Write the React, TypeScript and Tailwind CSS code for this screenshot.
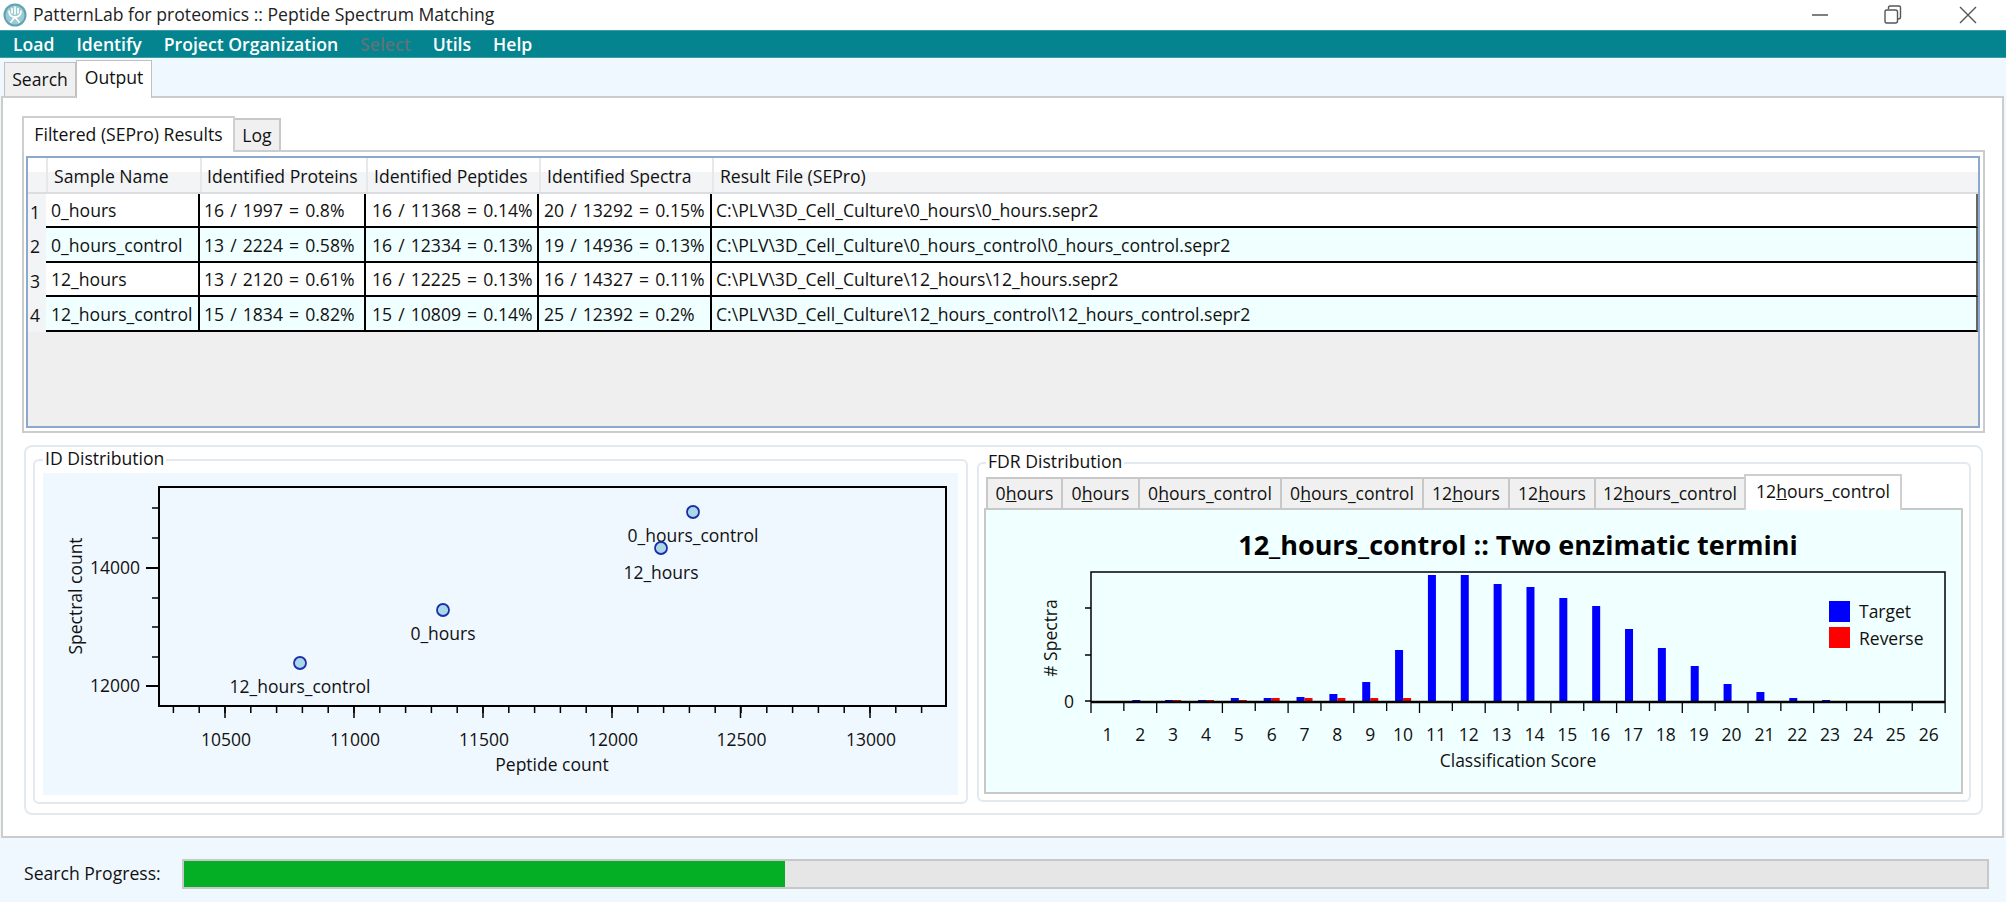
import React from "react";

const cols = "grid grid-cols-[18px_154px_166px_173px_173px_1fr]";

const rows = [
  ["0_hours", "16 / 1997 = 0.8%", "16 / 11368 = 0.14%", "20 / 13292 = 0.15%", "C:\\PLV\\3D_Cell_Culture\\0_hours\\0_hours.sepr2"],
  ["0_hours_control", "13 / 2224 = 0.58%", "16 / 12334 = 0.13%", "19 / 14936 = 0.13%", "C:\\PLV\\3D_Cell_Culture\\0_hours_control\\0_hours_control.sepr2"],
  ["12_hours", "13 / 2120 = 0.61%", "16 / 12225 = 0.13%", "16 / 14327 = 0.11%", "C:\\PLV\\3D_Cell_Culture\\12_hours\\12_hours.sepr2"],
  ["12_hours_control", "15 / 1834 = 0.82%", "15 / 10809 = 0.14%", "25 / 12392 = 0.2%", "C:\\PLV\\3D_Cell_Culture\\12_hours_control\\12_hours_control.sepr2"],
];
const rowHeights = ["h-[34px]", "h-[35px]", "h-[34px]", "h-[35px]"];
const cellPad = ["pl-[5px]", "pl-[4px] [word-spacing:1.5px]", "pl-[6px] [word-spacing:1.5px]", "pl-[5px] [word-spacing:1.5px]", "pl-[4px]"];
const headers = ["Sample Name", "Identified Proteins", "Identified Peptides", "Identified Spectra", "Result File (SEPro)"];
const headPad = ["pl-[6px]", "pl-[5px]", "pl-[6px]", "pl-[6px]", "pl-[6px]"];

const fdrTabs: [string, string, string][] = [
  ["0", "ours", "w-[75px]"],
  ["0", "ours", "w-[77px]"],
  ["0", "ours_control", "w-[142px]"],
  ["0", "ours_control", "w-[142px]"],
  ["12", "ours", "w-[86px]"],
  ["12", "ours", "w-[86px]"],
  ["12", "ours_control", "w-[150px]"],
];

// top y of each bar, one entry per score: [target, reverse]
const bars: [number, number][] = [
  [702, 702], [700, 702], [700, 700], [700, 700], [698, 700], [698, 698], [697, 698], [694, 698], [682, 698], [650, 698],
  [575, 702], [575, 702], [584, 702], [587, 702], [598, 702], [606, 702], [629, 702], [648, 702], [666, 702], [684, 702],
  [692, 702], [698, 702], [700, 702], [702, 702], [702, 702], [702, 702],
];

const stepX = 32.85;
const originX = 1091;

function Scatter() {
  const majorX = [225, 354, 483, 612, 740.5, 870];
  const minorX: number[] = [];
  for (let i = 0; i < 30; i++) minorX.push(173.4 + i * 25.8);
  const xLabels = ["10500", "11000", "11500", "12000", "12500", "13000"];
  const points = [
    [693, 512, "0_hours_control", 536],
    [661, 548, "12_hours", 573],
    [443, 610, "0_hours", 634],
    [300, 663, "12_hours_control", 687],
  ] as const;
  return (
    <svg width={915} height={322} viewBox="43 473 915 322" className="block">
      <rect x={159} y={487} width={787} height={219} fill="none" stroke="#000" strokeWidth={2} />
      {minorX.filter((x) => x < 930).map((x) => (
        <line key={x} x1={x} x2={x} y1={706} y2={713} stroke="#000" strokeWidth={1.5} />
      ))}
      {majorX.map((x, i) => (
        <g key={x}>
          <line x1={x} x2={x} y1={706} y2={718} stroke="#000" strokeWidth={1.5} />
          <text x={x + 1} y={746} textAnchor="middle" fontSize={17.5} fill="#111">{xLabels[i]}</text>
        </g>
      ))}
      {[508, 538, 598, 627, 657].map((y) => (
        <line key={y} x1={152} x2={159} y1={y} y2={y} stroke="#000" strokeWidth={1.5} />
      ))}
      {[[568, "14000"], [686, "12000"]].map(([y, t]) => (
        <g key={t}>
          <line x1={146} x2={159} y1={y} y2={y} stroke="#000" strokeWidth={2} />
          <text x={140} y={(y as number) + 6} textAnchor="end" fontSize={17.5} fill="#111">{t}</text>
        </g>
      ))}
      {points.map(([x, y, t, ly]) => (
        <g key={t}>
          <circle cx={x} cy={y} r={6} fill="#a8d8ea" stroke="#1c2fa8" strokeWidth={1.8} />
          <text x={x} y={ly + 6} textAnchor="middle" fontSize={17.5} fill="#111">{t}</text>
        </g>
      ))}
      <text x={552} y={771} textAnchor="middle" fontSize={17.5} fill="#111">Peptide count</text>
      <text transform="translate(82 596) rotate(-90)" textAnchor="middle" fontSize={17.5} fill="#111">Spectral count</text>
    </svg>
  );
}

function BarChart() {
  return (
    <svg width={975} height={282} viewBox="986 510 975 282" className="block">
      <text x={1518} y={555} textAnchor="middle" fontSize={27} fontWeight={700} fill="#000">12_hours_control :: Two enzimatic termini</text>
      <path d="M1091 702 V572 H1945 V702" fill="none" stroke="#000" strokeWidth={1.5} />
      {bars.map(([t, r], i) => {
        const c = originX + (i + 0.5) * stepX;
        return (
          <g key={i}>
            {t < 702 && <rect x={c - 8} y={t} width={8} height={702 - t} fill="#0000ff" />}
            {r < 702 && <rect x={c} y={r} width={8} height={702 - r} fill="#ff0000" />}
            <text x={c} y={741} textAnchor="middle" fontSize={17.5} fill="#111">{i + 1}</text>
          </g>
        );
      })}
      {Array.from({ length: 27 }, (_, i) => (
        <line key={i} x1={originX + i * stepX} x2={originX + i * stepX} y1={702} y2={i % 2 ? 711 : 713} stroke="#000" strokeWidth={1.3} />
      ))}
      <line x1={1091} x2={1945} y1={702} y2={702} stroke="#000" strokeWidth={2.6} />
      {[608, 655, 701].map((y) => (
        <line key={y} x1={1085} x2={1091} y1={y} y2={y} stroke="#000" strokeWidth={1.5} />
      ))}
      <text x={1069} y={708} textAnchor="middle" fontSize={17.5} fill="#111">0</text>
      <text transform="translate(1057 638) rotate(-90)" textAnchor="middle" fontSize={17.5} fill="#111"># Spectra</text>
      <rect x={1829} y={601} width={21} height={21} fill="#0000ff" />
      <rect x={1829} y={627} width={21} height={21} fill="#ff0000" />
      <text x={1859} y={618} fontSize={17.5} fill="#111">Target</text>
      <text x={1859} y={645} fontSize={17.5} fill="#111">Reverse</text>
      <text x={1518} y={767} textAnchor="middle" fontSize={17.5} fill="#111">Classification Score</text>
    </svg>
  );
}

function AppIcon() {
  return (
    <svg width={24} height={24} viewBox="0 0 24 24" className="ml-[3px] shrink-0">
      <circle cx={12} cy={12} r={10.5} fill="#9cc9d2" stroke="#5fa3b3" strokeWidth={2} />
      <path d="M12 4 V11 M9 5.5 V10 M15 5.5 V10 M6 8 C6 13 9 14 12 14 C15 14 18 13 18 8 M8 19 L12 14 L16 19" fill="none" stroke="#ffffff" strokeWidth={1.7} strokeLinecap="round" />
    </svg>
  );
}

function WindowControls() {
  return (
    <div className="flex items-center">
      <svg width={18} height={24} viewBox="0 0 18 24" className="mr-[55px]">
        <line x1={1} x2={17} y1={12} y2={12} stroke="#555" strokeWidth={1.5} />
      </svg>
      <svg width={18} height={20} viewBox="0 0 18 20" className="mr-[57px]">
        <path d="M4.5 4 V2.5 Q4.5 1 6 1 H15 Q16.5 1 16.5 2.5 V12 Q16.5 14 14 14 M2.5 5 H11.5 Q13.5 5 13.5 7 V16 Q13.5 18 11.5 18 H2.5 Q1 18 1 16 V7 Q1 5 2.5 5 Z" fill="none" stroke="#555" strokeWidth={1.4} />
      </svg>
      <svg width={18} height={18} viewBox="0 0 18 18" className="mr-[29px]">
        <path d="M1 1 L17 17 M17 1 L1 17" fill="none" stroke="#555" strokeWidth={1.4} />
      </svg>
    </div>
  );
}

export default function App() {
  return (
    <div className="w-[2006px] h-[902px] overflow-hidden flex flex-col bg-[#f0f8ff] text-[#111] font-['Open_Sans',sans-serif] text-[17.6px] leading-none">
      {/* title bar */}
      <div className="h-[30px] shrink-0 bg-white flex items-center justify-between">
        <div className="flex items-center">
          <AppIcon />
          <span className="ml-[6px] text-[#222]">PatternLab for proteomics :: Peptide Spectrum Matching</span>
        </div>
        <WindowControls />
      </div>

      {/* menu */}
      <div className="h-[28px] shrink-0 bg-[#04848f] border-y border-[#3b9ca6] flex items-center pl-[13px] pt-[1px] gap-[22px] text-white font-semibold">
        <span>Load</span>
        <span>Identify</span>
        <span>Project Organization</span>
        <span className="text-[#5c7478]">Select</span>
        <span>Utils</span>
        <span>Help</span>
      </div>

      {/* main tabs */}
      <div className="h-[38px] shrink-0 pl-[4px] flex items-end">
        <div className="w-[72px] h-[34px] bg-[#f0f0f0] border border-b-0 border-[#c0c0c0] flex items-center justify-center">Search</div>
        <div className="w-[76px] h-[38px] -mb-[2px] z-10 bg-white border border-b-0 border-[#c0c0c0] flex items-center justify-center pb-[4px]">Output</div>
      </div>

      {/* main panel */}
      <div className="ml-[1px] w-[2003px] h-[742px] shrink-0 bg-white border-2 border-[#cccccc] pl-[19px] pt-[18px]">
        <div className="h-[34px] flex items-end">
          <div className="w-[213px] h-[36px] -mb-[2px] z-10 bg-white border-2 border-b-0 border-[#cfcfcf] flex items-center justify-center">Filtered (SEPro) Results</div>
          <div className="w-[46px] h-[32px] bg-[#f0f0f0] border-2 border-l-0 border-b-0 border-[#c8c8c8] flex items-center justify-center pt-[2px]">Log</div>
        </div>

        <div className="w-[1963px] h-[283px] border-2 border-[#cccccc] pl-[2px] pt-[4px]">
          <div className="w-[1954px] h-[272px] border-2 border-[#8aa9cc] bg-[#efefef]">
            <div className={`${cols} h-[36px] bg-[linear-gradient(#ffffff_40%,#f3f4f6_40%)] border-b-2 border-[#dcdde0]`}>
              <div />
              {headers.map((h, j) => (
                <div key={h} className={`border-l-2 border-[#e6e8ea] ${headPad[j]} flex items-center pt-[4px] whitespace-nowrap`}>{h}</div>
              ))}
            </div>
            {rows.map((r, i) => (
              <div key={r[0]} className={`${cols} ${rowHeights[i]}`}>
                <div className="bg-[#f3f4f6] flex items-center justify-end pr-[6px] pt-[3px]">{i + 1}</div>
                {r.map((c, j) => (
                  <div
                    key={j}
                    className={`${i % 2 ? "bg-[#f0ffff]" : "bg-white"} border-b-2 border-black border-r-2 ${j === 4 ? "border-r-[#666]" : ""} flex items-center pt-[2px] whitespace-nowrap ${cellPad[j]}`}
                  >
                    {c}
                  </div>
                ))}
              </div>
            ))}
          </div>
        </div>

        {/* outer group */}
        <div className="ml-[2px] mt-[12px] w-[1959px] h-[370px] border-2 border-[#e3eaef] rounded-lg flex items-start pl-[7px] pt-[12px]">
          <div className="relative w-[935px] h-[345px] border-2 border-[#e3e9ef] rounded-md pl-[8px] pt-[12px]">
            <span className="absolute left-[8px] -top-[14px] h-[24px] bg-white px-[2px] flex items-center">ID Distribution</span>
            <div className="w-[915px] h-[322px] bg-[#f0f8ff]">
              <Scatter />
            </div>
          </div>

          <div className="relative ml-[9px] mt-[3px] w-[994px] h-[340px] border-2 border-[#e3e9ef] rounded-md pl-[5px] pt-[9px]">
            <span className="absolute left-[7px] -top-[14px] h-[24px] bg-white px-[2px] flex items-center">FDR Distribution</span>
            <div className="h-[35px] pl-[2px] flex items-end">
              {fdrTabs.map(([a, b, w], i) => (
                <div key={i} className={`${w} h-[31px] bg-[#f0f0f0] border-2 border-r-0 border-b-0 border-[#c8c8c8] flex items-center justify-center`}>
                  {a}
                  <u>h</u>
                  {b}
                </div>
              ))}
              <div className="w-[158px] h-[36px] -mb-[2px] z-10 bg-white border-2 border-b-0 border-[#cfcfcf] flex items-center justify-center pb-[3px]">
                12<u>h</u>ours_control
              </div>
            </div>
            <div className="w-[979px] h-[286px] border-2 border-[#c8c8c8] bg-[#f0ffff]">
              <BarChart />
            </div>
          </div>
        </div>
      </div>

      {/* progress */}
      <div className="h-[64px] shrink-0 flex items-start pl-[24px] pt-[21px]">
        <span className="w-[158px] h-[30px] flex items-center whitespace-nowrap">Search Progress:</span>
        <div className="w-[1807px] h-[30px] border-2 border-[#c8c8c8] bg-[#e6e6e6]">
          <div className="w-[601px] h-full bg-[#05af25]" />
        </div>
      </div>
    </div>
  );
}
